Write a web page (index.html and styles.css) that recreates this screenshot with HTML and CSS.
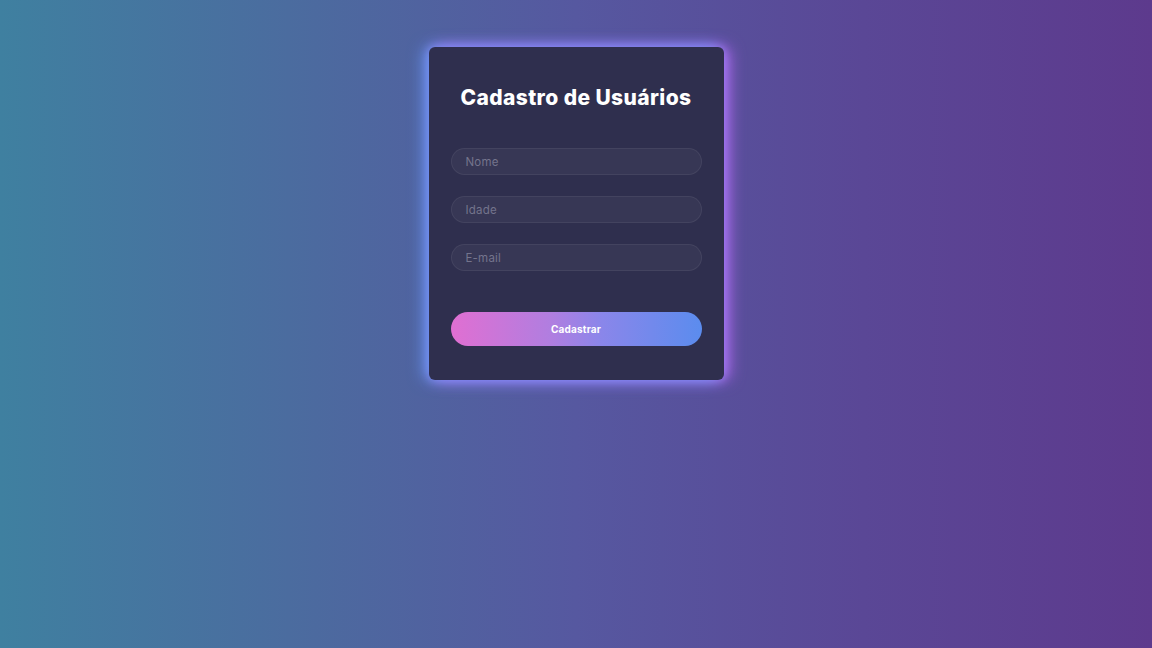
FILE: index.html
```html
<!DOCTYPE html>
<html lang="pt-BR">
<head>
<meta charset="utf-8">
<title>Cadastro de Usuários</title>
<link rel="stylesheet" href="styles.css">
</head>
<body>
<main class="page">
  <form class="card">
    <h1 class="title">Cadastro de Usuários</h1>
    <div class="fields">
      <input class="field" type="text" placeholder="Nome">
      <input class="field" type="number" placeholder="Idade">
      <input class="field" type="email" placeholder="E-mail">
    </div>
    <button class="btn" type="button">Cadastrar</button>
  </form>
</main>
</body>
</html>
```
FILE: styles.css
```css
* { box-sizing: border-box; }
html, body { margin: 0; height: 100%; }
body {
  font-family: "Inter", "Liberation Sans", sans-serif;
  background: linear-gradient(90deg, #3f80a0 0%, #4b6c9f 25%, #5658a0 50%, #5a4796 75%, #5d3a8d 100%);
}
.page {
  height: 648px;
  display: flex;
  justify-content: center;
  align-items: flex-start;
  padding-top: 47px;
}
.card {
  width: 295px;
  height: 333px;
  background: #2f2f4e;
  border-radius: 6px;
  padding: 38px 22px 0;
  display: flex;
  flex-direction: column;
  box-shadow: -5px 0 16px rgba(100, 160, 255, 0.85), 5px 0 16px rgba(205, 105, 255, 0.85), 0 0 8px rgba(160,140,255,0.6);
}
.title {
  margin: 0;
  color: #ffffff;
  font-size: 21px;
  font-weight: 800;
  text-align: center;
  line-height: 26px;
  letter-spacing: 0.4px;
}
.fields {
  display: flex;
  flex-direction: column;
  gap: 21px;
  margin-top: 37px;
}
.field {
  height: 27px;
  width: 100%;
  border-radius: 14px;
  border: 1px solid rgba(255,255,255,0.06);
  background: rgba(255,255,255,0.045);
  padding: 0 14px;
  font-family: inherit;
  font-size: 11.5px;
  letter-spacing: 0.2px;
  color: #ddd;
  outline: none;
}
.field::placeholder { color: #74748c; }
.btn {
  margin-top: 41px;
  height: 34px;
  width: 100%;
  border: none;
  border-radius: 17px;
  background: linear-gradient(90deg, #e06fd2 0%, #b07ee0 40%, #8a86ea 60%, #5b8cee 100%);
  color: #fff;
  font-family: inherit;
  font-weight: 700;
  font-size: 10px;
  letter-spacing: 0.2px;
  cursor: pointer;
}
```
